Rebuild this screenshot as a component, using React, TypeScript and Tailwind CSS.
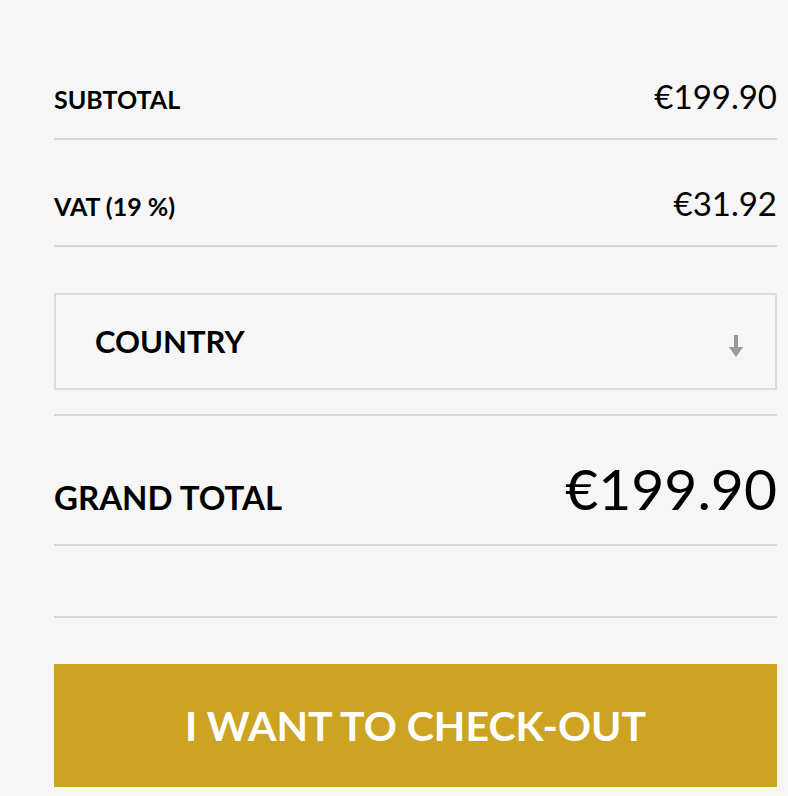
import React from "react";

export default function App() {
  const font = { fontFamily: "Lato, 'Open Sans', sans-serif" } as React.CSSProperties;
  return (
    <div className="w-[788px] h-[796px] bg-[#f6f6f6] text-black overflow-hidden" style={font}>
      <div className="ml-[54px] w-[723px] flex flex-col">
        <div className="h-[140px] border-b-2 border-[#d6d6d6] flex justify-between items-baseline pt-[80px]">
          <span className="text-[25px] font-bold leading-none">SUBTOTAL</span>
          <span className="text-[33px] font-normal leading-none">€199.90</span>
        </div>
        <div className="h-[107px] border-b-2 border-[#d6d6d6] flex justify-between items-baseline pt-[47px]">
          <span className="text-[25px] font-bold leading-none">VAT (19 %)</span>
          <span className="text-[33px] font-normal leading-none">€31.92</span>
        </div>
        <div className="mt-[46px] h-[97px] border-2 border-[#dcdcdc] flex items-center justify-between pl-[39px] pr-[32px]">
          <span className="text-[31px] font-bold leading-none">COUNTRY</span>
          <svg width="14" height="22" viewBox="0 0 14 22" className="mt-[9px]">
            <rect x="5" y="0" width="4" height="13" fill="#9a9a9a" />
            <path d="M0 12 L14 12 L7 22 Z" fill="#9a9a9a" />
          </svg>
        </div>
        <div className="mt-[24px] h-[132px] border-t-2 border-b-2 border-[#d6d6d6] flex justify-between items-baseline pt-[44px]">
          <span className="text-[33px] font-bold leading-none">GRAND TOTAL</span>
          <span className="text-[57px] font-normal leading-none">€199.90</span>
        </div>
        <div className="h-[72px] border-b-2 border-[#d6d6d6]" />
        <button className="mt-[46px] h-[123px] w-full bg-[#cda421] text-white flex items-center justify-center">
          <span className="text-[41px] font-bold leading-none">I WANT TO CHECK-OUT</span>
        </button>
      </div>
    </div>
  );
}
